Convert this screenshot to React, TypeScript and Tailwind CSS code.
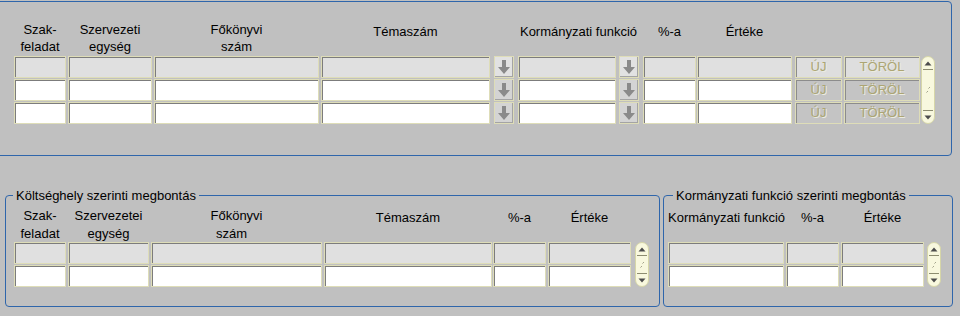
import React from "react";

function Field({ cls, light }: { cls: string; light?: boolean }) {
  return (
    <div
      className={`${cls} h-[22px] shrink-0 border border-[#deddb8] shadow-[inset_1px_1px_0_#7c7c7c] ${
        light ? "bg-[#e0e0e0]" : "bg-white"
      }`}
    />
  );
}

function ArrowBtn({ cls, light }: { cls: string; light?: boolean }) {
  return (
    <div
      className={`${cls} w-[20px] h-[22px] shrink-0 flex items-center justify-center border border-[#deddb8] shadow-[inset_-1px_-1px_0_#a4a4a4] ${
        light ? "bg-[#e2e2e2]" : "bg-[#d4d4d4]"
      }`}
    >
      <svg width="12" height="14" viewBox="0 0 12 14">
        <path d="M4 0h4v7h4l-6 7-6-7h4z" fill="#8a8a8a" />
      </svg>
    </div>
  );
}

function Btn({ cls, light, children }: { cls: string; light?: boolean; children: React.ReactNode }) {
  return (
    <div
      className={`${cls} h-[22px] shrink-0 flex items-center justify-center border border-[#deddb8] shadow-[inset_1px_1px_0_#8c8c8c] text-[13px] text-[#aca574] [text-shadow:1px_1px_0_#ecece0] ${
        light ? "bg-[#dedede]" : "bg-[#c4c4c4]"
      }`}
    >
      {children}
    </div>
  );
}

function Scroll({ h }: { h: string }) {
  return (
    <div
      className={`${h} w-[14px] shrink-0 rounded-[7px] border border-[#d6d6a8] bg-[#f8f8de] flex flex-col items-center`}
    >
      <div className="h-[12px] w-full flex items-center justify-center">
        <svg width="8" height="5" viewBox="0 0 8 5">
          <path d="M4 0.5L7.5 4.5H0.5z" fill="#4c4c4c" />
        </svg>
      </div>
      <div className="w-[10px] h-px bg-[#8c8c70]" />
      <div className="flex-1 w-full flex items-center justify-center">
        <svg width="6" height="8" viewBox="0 0 6 8">
          <rect x="4" y="1" width="1" height="1" fill="#a4a48c" />
          <rect x="3" y="2" width="1" height="1" fill="#c8c8b0" />
          <rect x="2" y="5" width="1" height="1" fill="#a4a48c" />
          <rect x="1" y="6" width="1" height="1" fill="#c8c8b0" />
        </svg>
      </div>
      <div className="w-[10px] h-px bg-[#8c8c70]" />
      <div className="h-[12px] w-full flex items-center justify-center">
        <svg width="8" height="5" viewBox="0 0 8 5">
          <path d="M0.5 0.5H7.5L4 4.5z" fill="#4c4c4c" />
        </svg>
      </div>
    </div>
  );
}

function TopRow({ light }: { light?: boolean }) {
  return (
    <div className="flex h-[22px]">
      <Field cls="w-[52px]" light={light} />
      <Field cls="ml-[2px] w-[84px]" light={light} />
      <Field cls="ml-[2px] w-[165px]" light={light} />
      <Field cls="ml-[2px] w-[169px]" light={light} />
      <ArrowBtn cls="ml-[4px]" light={light} />
      <Field cls="ml-[4px] w-[98px]" light={light} />
      <ArrowBtn cls="ml-[3px]" light={light} />
      <Field cls="ml-[4px] w-[53px]" light={light} />
      <Field cls="ml-[1px] w-[95px]" light={light} />
      <Btn cls="ml-[3px] w-[47px]" light={light}>
        ÚJ
      </Btn>
      <Btn cls="ml-[2px] w-[76px]" light={light}>
        TÖRÖL
      </Btn>
    </div>
  );
}

function LeftRow({ light }: { light?: boolean }) {
  return (
    <div className="flex h-[22px]">
      <Field cls="w-[52px]" light={light} />
      <Field cls="ml-[2px] w-[81px]" light={light} />
      <Field cls="ml-[2px] w-[171px]" light={light} />
      <Field cls="ml-[2px] w-[168px]" light={light} />
      <Field cls="ml-[1px] w-[53px]" light={light} />
      <Field cls="ml-[2px] w-[83px]" light={light} />
    </div>
  );
}

function RightRow({ light }: { light?: boolean }) {
  return (
    <div className="flex h-[22px]">
      <Field cls="w-[116px]" light={light} />
      <Field cls="ml-[2px] w-[53px]" light={light} />
      <Field cls="ml-[2px] w-[83px]" light={light} />
    </div>
  );
}

export default function App() {
  return (
    <div className="w-[960px] h-[316px] overflow-hidden bg-[#c0c0c0] text-black text-[13px] font-['Liberation_Sans',Arial,sans-serif]">
      {/* Top panel */}
      <div className="ml-[-4px] mt-[1px] w-[956px] h-[155px] border border-[#2f66ab] rounded-r-[4px] pl-[17px]">
        <div className="mt-[19px] flex h-[35px] leading-[17px]">
          <div className="w-[52px] text-center">
            Szak-
            <br />
            feladat
          </div>
          <div className="ml-[2px] w-[84px] text-center">
            Szervezeti
            <br />
            egység
          </div>
          <div className="ml-[2px] w-[165px] text-center">
            Főkönyvi
            <br />
            szám
          </div>
          <div className="ml-[2px] w-[169px] text-center pt-[2px]">Témaszám</div>
          <div className="ml-[28px] w-[121px] text-center pt-[2px] whitespace-nowrap">
            Kormányzati funkció
          </div>
          <div className="ml-[4px] w-[53px] text-center pt-[2px]">%-a</div>
          <div className="ml-[1px] w-[95px] text-center pt-[2px]">Értéke</div>
        </div>
        <div className="flex items-start">
          <div className="flex flex-col gap-[1px]">
            <TopRow light />
            <TopRow />
            <TopRow />
          </div>
          <div className="ml-[1px]">
            <Scroll h="h-[68px]" />
          </div>
        </div>
      </div>

      {/* Bottom panels */}
      <div className="mt-[39px] flex">
        <div className="relative ml-[5px] w-[655px] h-[112px] border border-[#2f66ab] rounded-[4px] pl-[8px]">
          <span className="absolute -top-[9px] left-[7px] px-[3px] leading-[17px] bg-[#c0c0c0] whitespace-nowrap">
            Költséghely szerinti megbontás
          </span>
          <div className="mt-[11px] flex h-[35px] leading-[18px]">
            <div className="w-[52px] text-center">
              Szak-
              <br />
              feladat
            </div>
            <div className="ml-[2px] w-[81px] text-center">
              Szervezetei
              <br />
              egység
            </div>
            <div className="ml-[2px] w-[171px] text-center">
              Főkönyvi
              <br />
              <span className="pr-[10px]">szám</span>
            </div>
            <div className="ml-[2px] w-[168px] text-center pt-[2px]">Témaszám</div>
            <div className="ml-[1px] w-[53px] text-center pt-[2px]">%-a</div>
            <div className="ml-[2px] w-[83px] text-center pt-[2px]">Értéke</div>
          </div>
          <div className="flex items-start">
            <div className="flex flex-col gap-[1px]">
              <LeftRow light />
              <LeftRow />
            </div>
            <div className="ml-[4px]">
              <Scroll h="h-[45px]" />
            </div>
          </div>
        </div>

        <div className="relative ml-[3px] w-[290px] h-[112px] border border-[#2f66ab] rounded-[4px] pl-[4px]">
          <span className="absolute -top-[9px] left-[9px] px-[3px] leading-[17px] bg-[#c0c0c0] whitespace-nowrap">
            Kormányzati funkció szerinti megbontás
          </span>
          <div className="mt-[11px] flex h-[35px] leading-[18px]">
            <div className="w-[116px] text-center pt-[2px] whitespace-nowrap">Kormányzati funkció</div>
            <div className="ml-[2px] w-[53px] text-center pt-[2px]">%-a</div>
            <div className="ml-[2px] w-[83px] text-center pt-[2px]">Értéke</div>
          </div>
          <div className="flex items-start">
            <div className="flex flex-col gap-[1px]">
              <RightRow light />
              <RightRow />
            </div>
            <div className="ml-[3px]">
              <Scroll h="h-[45px]" />
            </div>
          </div>
        </div>
      </div>
    </div>
  );
}
